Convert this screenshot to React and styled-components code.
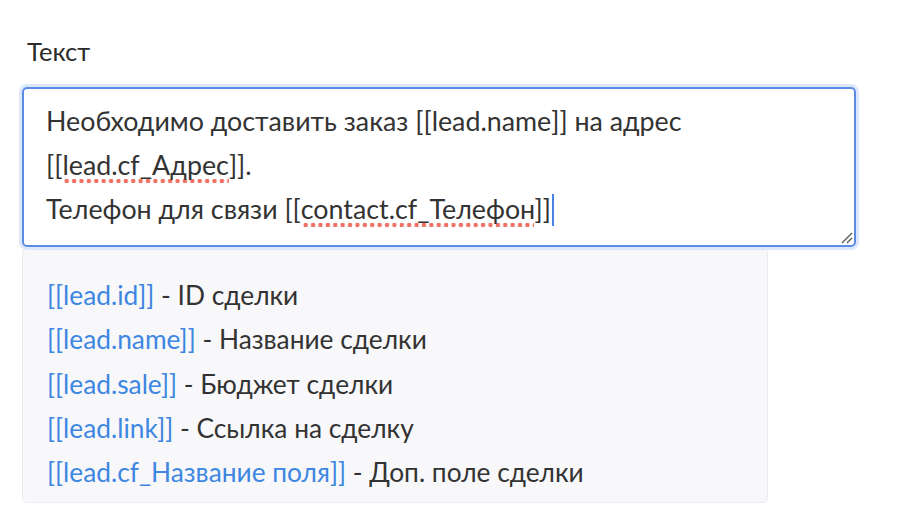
import React from "react";
import styled, { createGlobalStyle } from "styled-components";

const Global = createGlobalStyle`
  html, body { margin: 0; padding: 0; background: #fff; }
  body { font-family: Lato, "Noto Sans", sans-serif; color: #333; }
`;

const Page = styled.div`
  padding: 29px 0 0 22px;
  display: flex;
  flex-direction: column;
`;

const Label = styled.div`
  font-size: 25.5px;
  line-height: 44px;
  color: #2b2b2b;
  padding-left: 5px;
  margin-bottom: 14px;
`;

const Editor = styled.div`
  position: relative;
  box-sizing: border-box;
  width: 834px;
  height: 160px;
  border: 2px solid #5b8ce4;
  border-radius: 5px;
  box-shadow: 0 0 0 3px #dde7fb;
  padding: 10px 22px;
  font-size: 26.8px;
  line-height: 44px;
  color: #333;
`;

/* spell-check style dotted underline */
const Misspelled = styled.span`
  padding-bottom: 3px;
  background-image: radial-gradient(circle, #ef7264 2px, transparent 2.5px);
  background-repeat: repeat-x;
  background-size: 7.4px 6px;
  background-position: 1px 100%;
`;

const Caret = styled.span`
  display: inline-block;
  width: 2px;
  height: 32px;
  background: #4a82e6;
  vertical-align: -7px;
  margin-left: 1px;
`;

const Grip = styled.svg`
  position: absolute;
  right: 1px;
  bottom: 1px;
`;

const Hints = styled.div`
  box-sizing: border-box;
  width: 746px;
  margin-top: 1px;
  background: #f8f8fa;
  border: 1px solid #ececf0;
  border-radius: 5px;
  padding: 24px 24px 8px;
  font-size: 26.3px;
  line-height: 44.3px;
  color: #333;
`;

const Hint = styled.div``;

const Token = styled.span`
  color: #3d86e2;
`;

const hints = [
  ["[[lead.id]]", "ID сделки"],
  ["[[lead.name]]", "Название сделки"],
  ["[[lead.sale]]", "Бюджет сделки"],
  ["[[lead.link]]", "Ссылка на сделку"],
  ["[[lead.cf_Название поля]]", "Доп. поле сделки"],
];

export default function App() {
  return (
    <>
      <Global />
      <Page>
        <Label>Текст</Label>
        <Editor>
          <div>Необходимо доставить заказ [[lead.name]] на адрес</div>
          <div>
            [[<Misspelled>lead.cf_Адрес</Misspelled>]].
          </div>
          <div>
            Телефон для связи [[<Misspelled>contact.cf_Телефон</Misspelled>]]
            <Caret />
          </div>
          <Grip width="14" height="14" viewBox="0 0 14 14">
            <path d="M13 3 L3 13 M13 8 L8 13" stroke="#555" strokeWidth="1.3" />
          </Grip>
        </Editor>
        <Hints>
          {hints.map(([t, d]) => (
            <Hint key={t}>
              <Token>{t}</Token> - {d}
            </Hint>
          ))}
        </Hints>
      </Page>
    </>
  );
}
